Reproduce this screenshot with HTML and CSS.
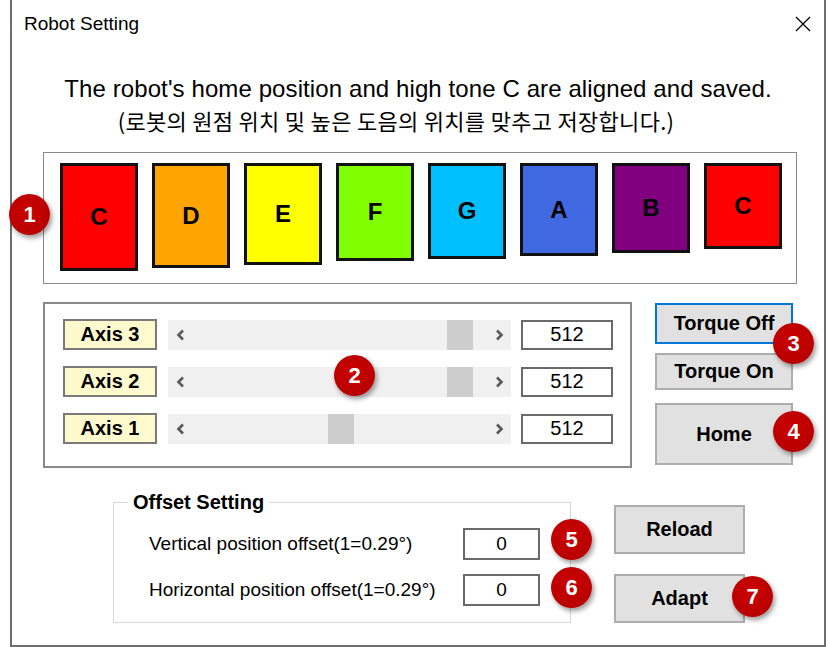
FILE: index.html
```html
<!DOCTYPE html>
<html lang="en">
<head>
<meta charset="utf-8">
<title>Robot Setting</title>
<link rel="stylesheet" href="styles.css">
</head>
<body>
<div class="window">
  <div class="titlebar">
    <span class="title">Robot Setting</span>
    <svg class="close" viewBox="0 0 16 16"><path d="M1 1L15 15M15 1L1 15" stroke="#000" stroke-width="1.3" fill="none"/></svg>
  </div>
  <p class="msg">The robot's home position and high tone C are aligned and saved.</p>
  <p class="msg-ko">(로봇의 원점 위치 및 높은 도음의 위치를 맞추고 저장합니다.)</p>

  <div class="keys">
    <div class="key k1">C</div>
    <div class="key k2">D</div>
    <div class="key k3">E</div>
    <div class="key k4">F</div>
    <div class="key k5">G</div>
    <div class="key k6">A</div>
    <div class="key k7">B</div>
    <div class="key k8">C</div>
  </div>

  <div class="mid">
    <div class="axes">
      <div class="axis-row">
        <div class="axis-label">Axis 3</div>
        <div class="scroll">
          <span class="arrow"><svg width="9" height="12" viewBox="0 0 9 12"><path d="M7 1.5L2.5 6L7 10.5" fill="none" stroke="#5a5a5a" stroke-width="2.6"/></svg></span>
          <div class="track"><div class="thumb" style="margin-left:255px"></div></div>
          <span class="arrow"><svg width="9" height="12" viewBox="0 0 9 12"><path d="M2 1.5L6.5 6L2 10.5" fill="none" stroke="#5a5a5a" stroke-width="2.6"/></svg></span>
        </div>
        <div class="value">512</div>
      </div>
      <div class="axis-row">
        <div class="axis-label">Axis 2</div>
        <div class="scroll">
          <span class="arrow"><svg width="9" height="12" viewBox="0 0 9 12"><path d="M7 1.5L2.5 6L7 10.5" fill="none" stroke="#5a5a5a" stroke-width="2.6"/></svg></span>
          <div class="track"><div class="thumb" style="margin-left:255px"></div></div>
          <span class="arrow"><svg width="9" height="12" viewBox="0 0 9 12"><path d="M2 1.5L6.5 6L2 10.5" fill="none" stroke="#5a5a5a" stroke-width="2.6"/></svg></span>
        </div>
        <div class="value">512</div>
      </div>
      <div class="axis-row">
        <div class="axis-label">Axis 1</div>
        <div class="scroll">
          <span class="arrow"><svg width="9" height="12" viewBox="0 0 9 12"><path d="M7 1.5L2.5 6L7 10.5" fill="none" stroke="#5a5a5a" stroke-width="2.6"/></svg></span>
          <div class="track"><div class="thumb" style="margin-left:136px"></div></div>
          <span class="arrow"><svg width="9" height="12" viewBox="0 0 9 12"><path d="M2 1.5L6.5 6L2 10.5" fill="none" stroke="#5a5a5a" stroke-width="2.6"/></svg></span>
        </div>
        <div class="value">512</div>
      </div>
    </div>
    <div class="side">
      <button class="btn btn-focus torque-off">Torque Off</button>
      <button class="btn torque-on">Torque On</button>
      <button class="btn home">Home</button>
    </div>
  </div>

  <div class="bottom">
    <fieldset class="offset">
      <legend>Offset Setting</legend>
      <div class="offset-rows">
        <div class="offset-row"><span>Vertical position offset(1=0.29°)</span><div class="num">0</div></div>
        <div class="offset-row"><span>Horizontal position offset(1=0.29°)</span><div class="num">0</div></div>
      </div>
    </fieldset>
    <div class="actions">
      <button class="btn action">Reload</button>
      <button class="btn action">Adapt</button>
    </div>
  </div>

  <span class="badge b1">1</span>
  <span class="badge b2">2</span>
  <span class="badge b3">3</span>
  <span class="badge b4">4</span>
  <span class="badge b5">5</span>
  <span class="badge b6">6</span>
  <span class="badge b7">7</span>
</div>
</body>
</html>
```

FILE: styles.css
```css
html, body {
  margin: 0;
  background: #fff;
}
body {
  font-family: "Liberation Sans", Arial, sans-serif;
  color: #000;
}
.window {
  position: relative;
  margin-left: 10px;
  width: 816px;
  height: 647px;
  box-sizing: border-box;
  border: 2px solid #6e6e6e;
  border-top: none;
  background: #fff;
}
.titlebar {
  height: 48px;
  display: flex;
  align-items: center;
  justify-content: space-between;
  padding: 0 13px 0 12px;
}
.title {
  font-size: 19px;
}
.close {
  width: 16px;
  height: 16px;
}
.msg {
  margin: 27px 0 0;
  font-size: 24px;
  letter-spacing: 0.1px;
  line-height: 28px;
  text-align: center;
}
.msg-ko {
  margin: 0;
  font-family: "Noto Sans CJK KR", sans-serif;
  font-size: 22px;
  letter-spacing: 0.3px;
  line-height: 34px;
  text-align: center;
  padding-right: 44px;
}
.keys {
  margin: 15px 0 0 31px;
  width: 754px;
  height: 132px;
  box-sizing: border-box;
  border: 1px solid #8a8a8a;
  padding: 10px 0 0 16px;
  display: flex;
  gap: 14px;
  align-items: flex-start;
}
.key {
  width: 78px;
  box-sizing: border-box;
  border: 3px solid #111;
  display: flex;
  align-items: center;
  justify-content: center;
  font-weight: bold;
  font-size: 24px;
}
.k1 { height: 108px; background: #ff0000; }
.k2 { height: 105px; background: #ffa500; }
.k3 { height: 102px; background: #ffff00; }
.k4 { height: 98px; background: #7fff00; }
.k5 { height: 96px; background: #00bfff; }
.k6 { height: 93px; background: #4169e1; }
.k7 { height: 90px; background: #800080; }
.k8 { height: 86px; background: #ff0000; }

.mid {
  display: flex;
  margin-top: 18px;
}
.axes {
  margin-left: 31px;
  width: 589px;
  height: 166px;
  box-sizing: border-box;
  border: 2px solid #8a8a8a;
  padding: 15px 0 0 18px;
  display: flex;
  flex-direction: column;
  gap: 16px;
}
.axis-row {
  display: flex;
  align-items: center;
  height: 31px;
}
.axis-label {
  width: 94px;
  height: 31px;
  box-sizing: border-box;
  border: 2px solid #7a7a7a;
  background: #fffacd;
  font-weight: bold;
  font-size: 20px;
  display: flex;
  align-items: center;
  justify-content: center;
}
.scroll {
  margin-left: 11px;
  width: 343px;
  height: 30px;
  background: #f0f0f0;
  display: flex;
}
.arrow {
  width: 24px;
  display: flex;
  align-items: center;
  justify-content: center;
}
.track {
  flex: 1;
  display: flex;
}
.thumb {
  width: 26px;
  background: #cdcdcd;
}
.value {
  margin-left: 10px;
  width: 92px;
  height: 30px;
  box-sizing: border-box;
  border: 2px solid #6a6a6a;
  font-size: 20px;
  display: flex;
  align-items: center;
  justify-content: center;
}
.side {
  margin-left: 23px;
  padding-top: 1px;
  width: 138px;
  display: flex;
  flex-direction: column;
}
.btn {
  background: #e1e1e1;
  border: 2px solid #adadad;
  font-family: "Liberation Sans", Arial, sans-serif;
  font-weight: bold;
  font-size: 20px;
  color: #000;
  padding: 0;
  margin: 0;
  box-sizing: border-box;
}
.btn-focus {
  border-color: #0078d7;
}
.torque-off { height: 41px; margin-bottom: 9px; }
.torque-on { height: 37px; margin-bottom: 13px; }
.home { height: 62px; }

.bottom {
  display: flex;
  align-items: flex-start;
  margin-top: 22px;
}
.offset {
  margin: 0 0 0 101px;
  width: 458px;
  height: 133px;
  box-sizing: border-box;
  border: 1px solid #d6d6d6;
  padding: 0;
}
.offset legend {
  margin-left: 14px;
  padding: 0 5px;
  font-weight: bold;
  font-size: 20px;
  line-height: 24px;
}
.offset-rows {
  padding: 14px 30px 0 35px;
  display: flex;
  flex-direction: column;
  gap: 14px;
}
.offset-row {
  display: flex;
  align-items: center;
  justify-content: space-between;
  height: 32px;
  font-size: 19px;
}
.num {
  width: 77px;
  height: 32px;
  box-sizing: border-box;
  border: 2px solid #6a6a6a;
  display: flex;
  align-items: center;
  justify-content: center;
  font-size: 19px;
}
.actions {
  margin-left: 43px;
  padding-top: 15px;
  display: flex;
  flex-direction: column;
  gap: 20px;
}
.action {
  width: 131px;
  height: 49px;
}

.badge {
  position: absolute;
  width: 41px;
  height: 41px;
  border-radius: 50%;
  background: radial-gradient(circle at 45% 40%, #cc0000 0%, #b80000 70%, #a00000 100%);
  box-shadow: 2px 3px 5px rgba(0, 0, 0, 0.4);
  color: #fff;
  font-weight: bold;
  font-size: 22px;
  display: flex;
  align-items: center;
  justify-content: center;
}
.b1 { left: -3px; top: 194px; }
.b2 { left: 322px; top: 355px; }
.b3 { left: 761px; top: 323px; }
.b4 { left: 761px; top: 411px; }
.b5 { left: 539px; top: 519px; }
.b6 { left: 539px; top: 567px; }
.b7 { left: 720px; top: 576px; }
```
